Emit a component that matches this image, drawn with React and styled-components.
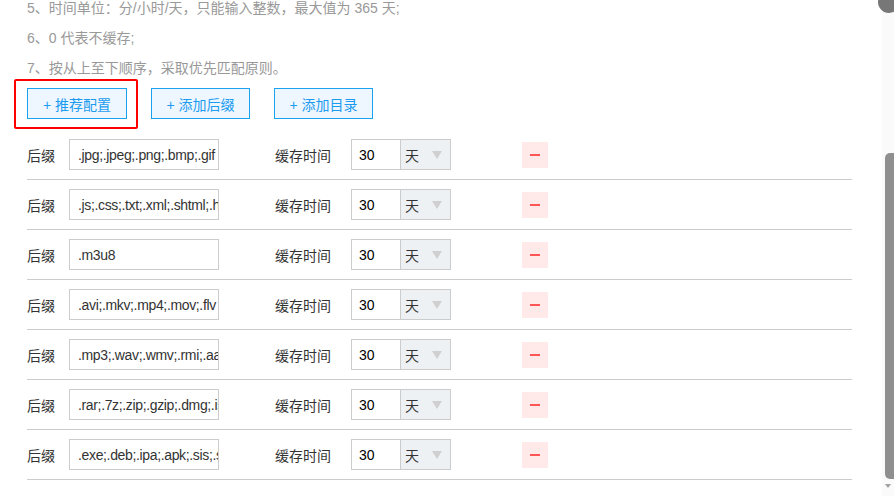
import React from 'react';
import styled, { createGlobalStyle } from 'styled-components';

const GlobalStyle = createGlobalStyle`
  html, body {
    margin: 0;
    padding: 0;
    background: #fff;
    overflow: hidden;
  }
  body {
    font-family: "Liberation Sans", "Noto Sans CJK SC", sans-serif;
    font-size: 14px;
    color: #333;
  }
`;

const Page = styled.div`
  width: 894px;
  height: 496px;
  position: relative;
  overflow: hidden;
`;

const Content = styled.div`
  padding: 0 0 0 27px;
  margin-top: -7px;
  width: 825px;
`;

const Notes = styled.div`
  color: #999;
  line-height: 30px;
`;

const ActionBar = styled.div`
  display: flex;
  gap: 24px;
  margin: 5px 0 11px;
`;

const ButtonWrap = styled.div`
  position: relative;
`;

const Highlight = styled.div`
  position: absolute;
  left: -13px;
  top: -9px;
  right: -11px;
  bottom: -10px;
  border: 2px solid #f00;
  border-radius: 2px;
  pointer-events: none;
`;

const AddButton = styled.button`
  width: ${p => p.$w || 100}px;
  height: 31px;
  background: #eef6ff;
  border: 1px solid #1aa3f0;
  color: #1c9cf0;
  font-family: "Liberation Sans", "Noto Sans CJK SC", sans-serif;
  font-size: 14px;
  padding: 0;
  cursor: pointer;
`;

const Row = styled.div`
  display: flex;
  align-items: center;
  height: 49px;
  border-bottom: 1px solid #ccc;
`;

const Label = styled.span`
  width: 42px;
  color: #333;
`;

const TextInput = styled.div`
  box-sizing: border-box;
  width: 150px;
  height: 31px;
  border: 1px solid #ccc;
  padding: 0 0 0 8px;
  line-height: 30px;
  color: #333;
  letter-spacing: -0.35px;
  white-space: nowrap;
  overflow: hidden;
  margin-right: 56px;
`;

const TimeLabel = styled.span`
  width: 76px;
`;

const NumberInput = styled.div`
  box-sizing: border-box;
  width: 50px;
  height: 31px;
  border: 1px solid #ccc;
  padding-left: 7px;
  line-height: 30px;
  color: #000;
`;

const UnitSelect = styled.div`
  box-sizing: border-box;
  width: 50px;
  height: 31px;
  border: 1px solid #ccc;
  border-left: none;
  background: #eef1f4;
  display: flex;
  align-items: center;
  justify-content: space-between;
  padding: 0 8px 0 4px;
  color: #333;
  margin-right: 71px;
`;

const Arrow = styled.span`
  width: 0;
  height: 0;
  border-left: 5px solid transparent;
  border-right: 5px solid transparent;
  border-top: 8px solid #d0d0d0;
`;

const RemoveButton = styled.div`
  width: 26px;
  height: 26px;
  background: #ffe9e9;
  display: flex;
  align-items: center;
  justify-content: center;
  &::after {
    content: '';
    width: 10px;
    height: 2px;
    background: #ff5555;
  }
`;

const ScrollTrack = styled.div`
  position: absolute;
  right: 0;
  top: 0;
  width: 12px;
  height: 100%;
  background: #fafafa;
`;

const ScrollThumb = styled.div`
  position: absolute;
  right: 0;
  top: 153px;
  width: 9px;
  height: 326px;
  background: #8f8f8f;
  border-radius: 5px 0 0 5px;
`;

const ScrollDown = styled.div`
  position: absolute;
  right: 3px;
  bottom: 8px;
  width: 0;
  height: 0;
  border-left: 3px solid transparent;
  border-right: 3px solid transparent;
  border-top: 4px solid #a0a0a0;
`;

const Badge = styled.div`
  position: absolute;
  right: -6px;
  top: -9px;
  width: 22px;
  height: 22px;
  border-radius: 50%;
  background: #777;
`;

const rules = [
  '.jpg;.jpeg;.png;.bmp;.gif',
  '.js;.css;.txt;.xml;.shtml;.html',
  '.m3u8',
  '.avi;.mkv;.mp4;.mov;.flv',
  '.mp3;.wav;.wmv;.rmi;.aac',
  '.rar;.7z;.zip;.gzip;.dmg;.iso',
  '.exe;.deb;.ipa;.apk;.sis;.sisx',
];

const App = () => {
  return (
    <Page>
      <GlobalStyle />
      <Content>
        <Notes>
          <div>5、时间单位：分/小时/天，只能输入整数，最大值为 365 天;</div>
          <div>6、0 代表不缓存;</div>
          <div>7、按从上至下顺序，采取优先匹配原则。</div>
        </Notes>
        <ActionBar>
          <ButtonWrap>
            <AddButton>+ 推荐配置</AddButton>
            <Highlight />
          </ButtonWrap>
          <AddButton $w={99}>+ 添加后缀</AddButton>
          <AddButton $w={99}>+ 添加目录</AddButton>
        </ActionBar>
        {rules.map((r, i) => (
          <Row key={i}>
            <Label>后缀</Label>
            <TextInput>{r}</TextInput>
            <TimeLabel>缓存时间</TimeLabel>
            <NumberInput>30</NumberInput>
            <UnitSelect>
              天
              <Arrow />
            </UnitSelect>
            <RemoveButton />
          </Row>
        ))}
      </Content>
      <ScrollTrack>
        <ScrollThumb />
        <ScrollDown />
      </ScrollTrack>
      <Badge />
    </Page>
  );
};

export default App;
